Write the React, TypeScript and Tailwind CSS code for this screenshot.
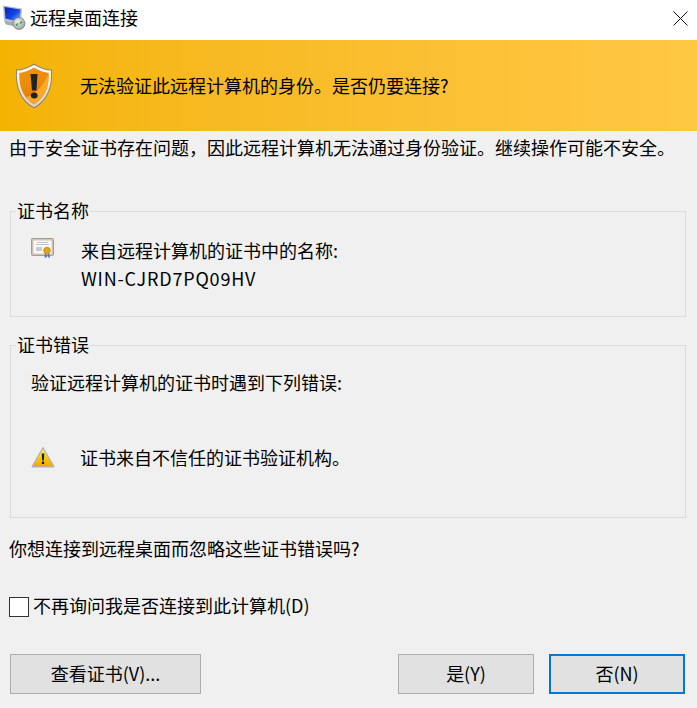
import React from "react";

function MonitorIcon() {
  return (
    <svg width="26" height="30" viewBox="0 0 26 30" className="block">
      <defs>
        <linearGradient id="scr" x1="0" y1="0" x2="1" y2="1">
          <stop offset="0" stopColor="#0420b8" />
          <stop offset="0.55" stopColor="#1446e6" />
          <stop offset="1" stopColor="#9cc0f8" />
        </linearGradient>
        <radialGradient id="disc" cx="0.4" cy="0.35" r="0.8">
          <stop offset="0" stopColor="#eef0ee" />
          <stop offset="1" stopColor="#8a9490" />
        </radialGradient>
      </defs>
      <path d="M1 0.5 L20 3.5 L19 19 L2 15.5 Z" fill="#b7bcc8" />
      <path d="M2.5 2 L18.5 4.5 L17.5 17 L3.5 13.5 Z" fill="url(#scr)" />
      <path d="M2 15.5 L15 18 L16 22 L4 19.5 Z" fill="#a4aab4" />
      <circle cx="17" cy="18.5" r="6" fill="url(#disc)" stroke="#6e7874" strokeWidth="0.7" />
      <path d="M14 20.5 L16 18.5 M18 18.5 L20 16.5" stroke="#2e9c34" strokeWidth="1.5" />
    </svg>
  );
}

function ShieldIcon() {
  return (
    <svg width="38" height="46" viewBox="0 0 38 46" className="block">
      <defs>
        <linearGradient id="sh" x1="0" y1="0" x2="0.3" y2="1">
          <stop offset="0" stopColor="#f0960f" />
          <stop offset="0.55" stopColor="#ec8a0a" />
          <stop offset="1" stopColor="#e07405" />
        </linearGradient>
        <linearGradient id="rim" x1="0" y1="0" x2="0" y2="1">
          <stop offset="0" stopColor="#ffffff" />
          <stop offset="1" stopColor="#d8d4cc" />
        </linearGradient>
      </defs>
      <path d="M19 0.5 C25 4.5 31 6.5 37 6.5 C38 24 33 38 19 45.5 C5 38 0 24 1 6.5 C7 6.5 13 4.5 19 0.5 Z" fill="#8d8171" />
      <path d="M19 2 C25 5.5 31 7.5 36 7.5 C37 24 32 37 19 44.3 C6 37 1 24 2 7.5 C7 7.5 13 5.5 19 2 Z" fill="url(#rim)" />
      <path d="M19 4.5 C24 7.5 29 9.5 33.7 10 C34.2 24 30 35 19 41.5 C8 35 3.8 24 4.3 10 C9 9.5 14 7.5 19 4.5 Z" fill="url(#sh)" />
      <path d="M33.7 10 C34.2 24 30 35 19 41.5 C16 40 13 37 11 34 C20 32 29 22 33.7 10 Z" fill="#fbb02c" opacity="0.85" />
      <path d="M15.5 11 L22.5 11 L21.5 27.5 L17 27.5 Z" fill="#222" />
      <ellipse cx="19.2" cy="32.5" rx="3.4" ry="3" fill="#222" />
    </svg>
  );
}

function CertIcon() {
  return (
    <svg width="24" height="20" viewBox="0 0 24 20" className="block">
      <rect x="0.5" y="0.5" width="22" height="17" rx="1" fill="#cfc4b4" stroke="#a89c8e" />
      <rect x="2.5" y="2.5" width="18" height="13" fill="#fbfaf6" />
      <path d="M6 4.5 H17 M5 6.5 H18" stroke="#b8c4d8" strokeWidth="1" />
      <rect x="5" y="9" width="6" height="4" fill="#c8ccd0" />
      <path d="M14.5 15 L14 19.5 L16 18 M17.5 15 L18.5 19.5 L16.5 18" fill="#3a70d0" stroke="#3a70d0" strokeWidth="0.8" />
      <circle cx="16" cy="12.5" r="3.3" fill="#e6a510" stroke="#b87e08" strokeWidth="0.7" />
    </svg>
  );
}

function WarnIcon() {
  return (
    <svg width="24" height="22" viewBox="0 0 24 22" className="block">
      <defs>
        <linearGradient id="tri" x1="0" y1="0" x2="0" y2="1">
          <stop offset="0" stopColor="#fff27a" />
          <stop offset="0.55" stopColor="#f7c90c" />
          <stop offset="1" stopColor="#eeaa00" />
        </linearGradient>
      </defs>
      <path d="M12 0.5 L23.5 20.5 Q23.5 21.5 22.5 21.5 L1.5 21.5 Q0.5 21.5 0.5 20.5 Z" fill="#b5b1a8" />
      <path d="M12 3 L21.8 20 L2.2 20 Z" fill="url(#tri)" />
      <path d="M10.7 7.5 H13.3 L12.8 14.5 H11.2 Z" fill="#1c1c1c" />
      <rect x="10.9" y="15.6" width="2.2" height="2.4" fill="#1c1c1c" />
    </svg>
  );
}

function Group({ title, className, children }: { title: string; className: string; children: React.ReactNode }) {
  return (
    <fieldset className={`mx-[10px] w-[676px] border border-[#dcdcdc] px-[7px] ${className}`}>
      <legend className="-ml-[2px] -translate-y-px px-px text-[18px] leading-[24px]">{title}</legend>
      {children}
    </fieldset>
  );
}

export default function App() {
  return (
    <div className="flex h-[708px] w-[697px] flex-col overflow-hidden bg-[#f0f0f0] text-[18px] leading-[24px] text-black [font-family:'Noto_Sans_CJK_SC','Noto_Sans',sans-serif]">
      <header className="flex h-[40px] shrink-0 items-center bg-white pl-[2px] pr-[9px]">
        <MonitorIcon />
        <span className="ml-[2px] -translate-y-[3px]">远程桌面连接</span>
        <svg width="15" height="15" viewBox="0 0 15 15" className="ml-auto -translate-y-[2px]">
          <path d="M0.5 0.5 L14.5 14.5 M14.5 0.5 L0.5 14.5" stroke="#111" strokeWidth="1" />
        </svg>
      </header>

      <div className="flex h-[91px] shrink-0 items-center bg-gradient-to-r from-[#f4b301] to-[#ffc843] pl-[15px]">
        <ShieldIcon />
        <span className="mb-[2px] ml-[27px]">无法验证此远程计算机的身份。是否仍要连接?</span>
      </div>

      <p className="ml-[9px] mt-[6px] -translate-y-[2px]">{"由于安全证书存在问题\uFF0C因此远程计算机无法通过身份验证。继续操作可能不安全。"}</p>

      <Group title="证书名称" className="mt-[38px] h-[118px]">
        <div className="flex pl-[13px] pt-[13px]">
          <div className="mt-[2px] w-[50px]">
            <CertIcon />
          </div>
          <div className="leading-[28px]">
            <div>来自远程计算机的证书中的名称:</div>
            <div className="tracking-[0.8px]">WIN-CJRD7PQ09HV</div>
          </div>
        </div>
      </Group>

      <Group title="证书错误" className="mt-[16px] h-[185px]">
        <div className="pl-[13px] pt-[13px]">验证远程计算机的证书时遇到下列错误:</div>
        <div className="mt-[51px] flex items-center pl-[13px]">
          <div className="w-[50px]">
            <WarnIcon />
          </div>
          <span className="-translate-x-px">证书来自不信任的证书验证机构。</span>
        </div>
      </Group>

      <p className="ml-[9px] mt-[18px]">你想连接到远程桌面而忽略这些证书错误吗?</p>

      <label className="ml-[9px] mt-[33px] flex items-center">
        <span className="h-[20px] w-[20px] border border-[#333] bg-white" />
        <span className="mb-[3px] ml-[5px] -translate-x-px">不再询问我是否连接到此计算机(D)</span>
      </label>

      <div className="ml-[10px] mt-[34px] flex">
        <button className="h-[40px] w-[191px] border border-[#adadad] bg-[#e1e1e1] pb-[2px]">查看证书(V)...</button>
        <button className="ml-[197px] h-[40px] w-[136px] border border-[#adadad] bg-[#e1e1e1] pb-[2px]">是(Y)</button>
        <button className="ml-[15px] h-[40px] w-[136px] border-2 border-[#0078d7] bg-[#e1e1e1] pb-[2px]">否(N)</button>
      </div>
    </div>
  );
}
